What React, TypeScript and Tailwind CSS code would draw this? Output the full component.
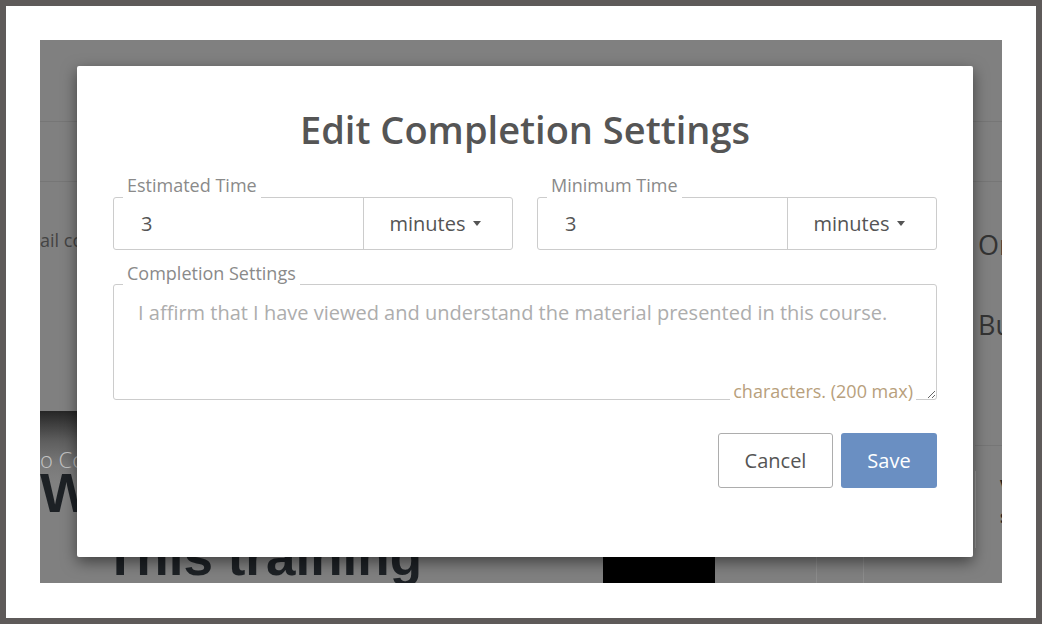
import React from "react";

export default function App() {
  return (
    <div className="h-[624px] w-[1042px] border-[6px] border-[#5e5a59] bg-white pb-[35px] pl-[34px] pr-[34px] pt-[34px]">
      <div className="relative h-[543px] w-[962px] overflow-hidden bg-[#808080]">
        <BackgroundPage />
        <CompletionModal />
      </div>
    </div>
  );
}

function BackgroundPage() {
  return (
    <div className="flex h-full flex-col font-['Open_Sans',sans-serif]">
      <div className="h-[82px] shrink-0 border-b border-[#767676]" />
      <div className="h-[60px] shrink-0 border-b border-[#767676]" />
      <div className="flex flex-1">
        {/* main column */}
        <div className="flex w-[935px] shrink-0 flex-col">
          <div className="h-[229px] shrink-0 whitespace-nowrap pt-[46px] text-[18px] leading-[24px] text-[#444]">
            ail course reminders
          </div>
          <div className="flex flex-1">
            <div className="w-[563px] shrink-0 bg-[linear-gradient(to_bottom,#262626_0px,#5e5e5e_30px,#7a7a7a_55px,#808080_70px)] pt-[38px]">
              <p className="whitespace-nowrap text-[22px] font-light leading-[20px] text-[#c4c4c4]">
                o Complete
              </p>
              <p className="mt-[3px] font-['Liberation_Sans',sans-serif] text-[56px] font-bold leading-[42px] text-[#1d2125]">
                W
              </p>
              <p className="ml-[64px] mt-[15px] whitespace-nowrap font-['Liberation_Sans',sans-serif] text-[53px] font-bold leading-[56px] text-[#1d2125]">
                This training
              </p>
            </div>
            <div className="w-[112px] shrink-0 bg-black" />
            <div className="ml-[101px] w-[48px] border-x border-[#8c8c8c]" />
          </div>
        </div>
        {/* right column */}
        <div className="flex-1 overflow-hidden">
          <div className="h-[263px] whitespace-nowrap pl-[3px] pt-[45px] text-[27px] leading-[36px] text-[#333]">
            <p>Or</p>
            <p className="mt-[44px]">Bu</p>
          </div>
          <div className="border-t border-[#767676] pt-[25px]">
            <div className="h-[77px] border-l border-[#999] pl-[24px] text-[18px] font-bold leading-[30px] text-[#222]">
              <p>Vi</p>
              <p>se</p>
            </div>
          </div>
        </div>
      </div>
    </div>
  );
}

function CompletionModal() {
  return (
    <div className="absolute left-[37px] top-[26px] w-[896px] rounded-[2px] bg-white pb-[69px] pl-[36px] pr-[36px] pt-[40px] font-['Open_Sans',sans-serif] shadow-[0_5px_15px_rgba(0,0,0,0.5)]">
      <h2 className="text-center text-[38px] font-semibold leading-[46px] text-[#555]">Edit Completion Settings</h2>

      <div className="mt-[21px] grid grid-cols-2 gap-[24px]">
        <TimeField label="Estimated Time" value="3" />
        <TimeField label="Minimum Time" value="3" />
      </div>

      <div className="mt-[11px] flex flex-col items-start">
        <span className="relative z-10 ml-[10px] -mb-[2px] bg-white px-[4px] text-[18px] leading-[25px] text-[#8a8a8a]">
          Completion Settings
        </span>
        <div className="relative w-full">
          <textarea
            placeholder="I affirm that I have viewed and understand the material presented in this course."
            className="block h-[116px] w-full rounded-[3px] border border-[#ccc] px-[24px] pt-[14px] text-[20px] leading-[28px] text-[#555] outline-none placeholder:text-[#adadad]"
          />
          <span className="absolute -bottom-[3px] right-[21px] bg-white px-[3px] text-[18px] leading-[24px] text-[#b8a07c]">
            characters. (200 max)
          </span>
        </div>
      </div>

      <div className="mt-[33px] flex justify-end gap-[8px]">
        <button className="h-[55px] w-[115px] rounded-[3px] border border-[#adadad] bg-white text-[20px] text-[#555]">
          Cancel
        </button>
        <button className="h-[55px] w-[96px] rounded-[3px] bg-[#6a8fc2] text-[20px] text-white">Save</button>
      </div>
    </div>
  );
}

function TimeField({ label, value }: { label: string; value: string }) {
  return (
    <div className="flex flex-col items-start">
      <span className="relative z-10 ml-[10px] -mb-px bg-white px-[4px] text-[18px] leading-[25px] text-[#8a8a8a]">
        {label}
      </span>
      <div className="flex h-[53px] w-full rounded-[3px] border border-[#ccc]">
        <input
          readOnly
          value={value}
          className="min-w-0 flex-1 bg-transparent pl-[27px] text-[20px] text-[#555] outline-none"
        />
        <button className="flex w-[149px] items-center justify-center gap-[7px] border-l border-[#ccc] pr-[6px] text-[20px] text-[#555]">
          minutes
          <svg width="8" height="5" viewBox="0 0 8 5">
            <path d="M0 0h8L4 5z" fill="#555" />
          </svg>
        </button>
      </div>
    </div>
  );
}
